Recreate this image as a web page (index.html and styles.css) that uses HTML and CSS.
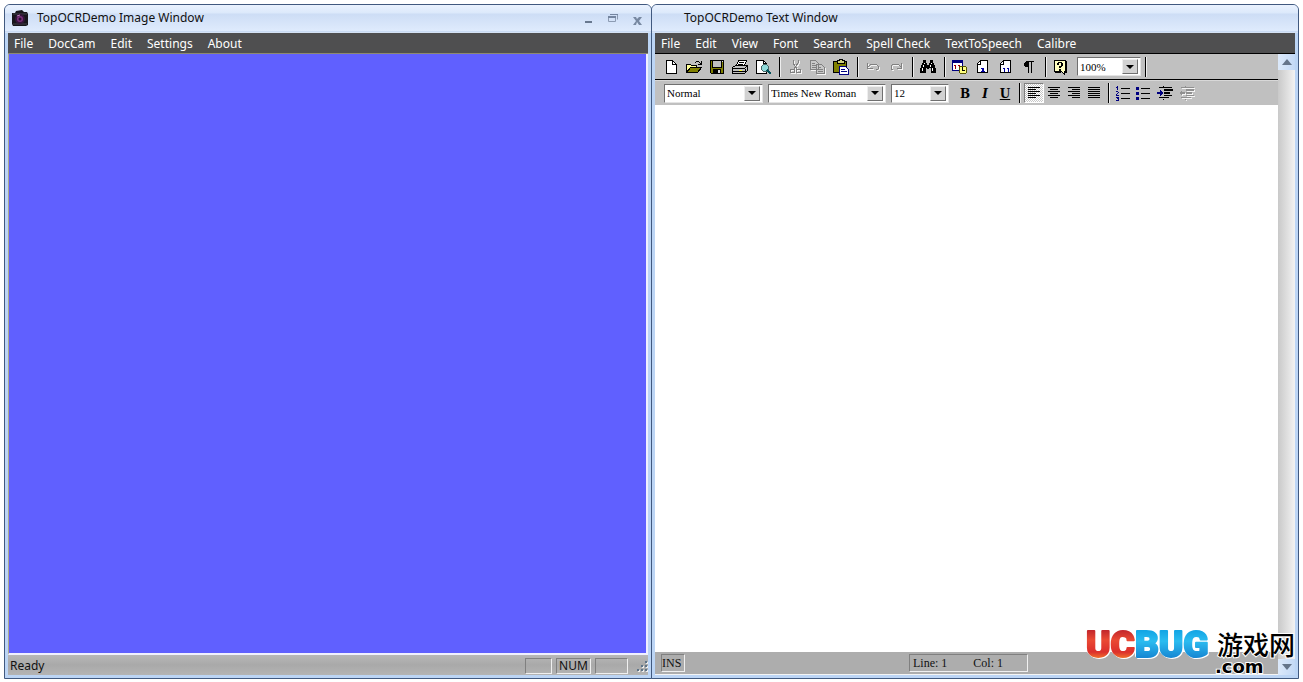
FILE: index.html
```html
<!DOCTYPE html>
<html lang="en">
<head>
<meta charset="utf-8">
<title>TopOCRDemo</title>
<link rel="stylesheet" href="styles.css">
</head>
<body>
<main class="desktop">
<section class="window">
  <header class="titlebar">
    <svg class="app-icon" width="18" height="18" viewBox="0 0 18 18"><path d="M1 4h3l1-2 6-1 2 2h3l1 2v11l-2 1H2l-1-2z" fill="#17161b"/><path d="M2 5h14M2 15h14" stroke="#45404c"/><circle cx="9" cy="10" r="5" fill="#35163b"/><circle cx="9" cy="10" r="3" fill="#7b2f7c"/><circle cx="9" cy="10" r="1.500" fill="#28102c"/><path d="M6 7l3-1" stroke="#b981b8"/></svg>
    <h1 class="title">TopOCRDemo Image Window</h1>
    <div class="captions">
      <button class="caption" aria-label="Minimize"><svg width="12" height="12"><path d="M2 8h7v2H2z" fill="#68788f"/></svg></button>
      <button class="caption" aria-label="Restore"><svg width="12" height="12"><path d="M3.500 1.500h7v5M1.500 3.500h7v5h-7z" fill="none" stroke="#8c9bb2"/><path d="M1 3h8v2H1zM3 1h8v1H3z" fill="#7485a0"/></svg></button>
      <button class="caption" aria-label="Close"><svg width="12" height="12"><path d="M2 4h3l1 2 2-2h3L8 8l3 4H8L6 9l-1 3H2l3-4z" fill="#7788a1"/></svg></button>
    </div>
  </header>
  <nav class="menu"><button>File</button><button>DocCam</button><button>Edit</button><button>Settings</button><button>About</button></nav>
  <div class="canvas"></div>
  <footer class="status">
    <span class="ready">Ready</span>
    <span class="pane pane-small"></span><span class="pane pane-num">NUM</span><span class="pane pane-wide"></span>
    <svg class="grip" width="12" height="12"><path d="M10 2h2v2h-2zM6 6h2v2H6zM10 6h2v2h-2zM2 10h2v2H2zM6 10h2v2H6zM10 10h2v2h-2z" fill="#eee"/><path d="M9 1h2v2H9zM5 5h2v2H5zM9 5h2v2H9zM1 9h2v2H1zM5 9h2v2H5zM9 9h2v2H9z" fill="#5f7488"/></svg>
  </footer>
</section>

<section class="window">
  <header class="titlebar titlebar-text"><h1 class="title">TopOCRDemo Text Window</h1></header>
  <nav class="menu"><button>File</button><button>Edit</button><button>View</button><button>Font</button><button>Search</button><button>Spell Check</button><button>TextToSpeech</button><button>Calibre</button></nav>
  <div class="workspace">
    <div class="editor">
      <div class="toolbar">
        <button class="tool" aria-label="New"><svg class="icon" viewBox="0 0 16 16"><path d="M3.500 1.500h6l4 4v9h-10z" fill="#fff" stroke="#000"/><path d="M9.500 1.500v4h4" fill="none" stroke="#000"/></svg></button>
        <button class="tool" aria-label="Open"><svg class="icon" viewBox="0 0 16 16"><path d="M0.500 13.500v-8h4l1 1h5v2" fill="#ffff9a" stroke="#000"/><path d="M0.500 13.500l4-5h11l-4 5z" fill="#808000" stroke="#000"/><path d="M9 3h1V2h3v1h1v1h1V2h1v4h-4V5h2V4h-1V3h-3v1H9z"/></svg></button>
        <button class="tool" aria-label="Save"><svg class="icon" viewBox="0 0 16 16"><path d="M1.500 1.500h13v13h-12l-1-1z" fill="#808000" stroke="#000"/><path d="M4 2h8v6H4z" fill="#c0c0c0"/><path d="M3 2h1v6h8V2h1v7H3zM4 10h8v4H4z"/><path d="M9 11h2v3H9zM13 2h1v1h-1z" fill="#ddd"/></svg></button>
        <button class="tool" aria-label="Print"><svg class="icon" viewBox="0 0 16 16"><path d="M4.500 6.500l2-5h8l-2 5z" fill="#fff" stroke="#000"/><path d="M7 3h5v1H7zM6 5h5v1H6z"/><path d="M0.500 8.500l3-2h12v5l-3 3h-12z" fill="#c0c0c0" stroke="#000"/><path d="M0 9h13v1H0zM1 12h12v1H1zM12 9l3-2v1l-3 2zM13 10h1v3h-1z"/><path d="M7 11h3v1H7z" fill="#ffff40"/></svg></button>
        <button class="tool" aria-label="Print preview"><svg class="icon" viewBox="0 0 16 16"><path d="M1.500 1.500h7l3 3v10h-10z" fill="#fff" stroke="#000"/><path d="M8.500 1.500v3h3" fill="none" stroke="#000"/><circle cx="10" cy="9" r="3.500" fill="#8fdada" stroke="#496666"/><path d="M12 11l4 4" stroke="#00505a" stroke-width="2"/></svg></button>
        <span class="sep"></span>
        <button class="tool" disabled aria-label="Cut"><svg class="icon disabled-icon" viewBox="0 0 16 16"><path d="M6 1v3l4 6M11 1v3l-4 6" fill="none" stroke="#808080"/><circle cx="5.500" cy="12" r="2" fill="none" stroke="#808080"/><circle cx="11.500" cy="12" r="2" fill="none" stroke="#808080"/></svg></button>
        <button class="tool" disabled aria-label="Copy"><svg class="icon disabled-icon" viewBox="0 0 16 16"><path d="M0.500 1.500h5l3 3v6h-8zM6.500 5.500h5l3 3v6h-8z" fill="#c8c8c8" stroke="#808080"/><path d="M2 4h3v1H2zM2 6h4v1H2zM2 8h4v1H2zM8 8h3v1H8zM8 10h5v1H8zM8 12h5v1H8z" fill="#808080"/></svg></button>
        <button class="tool" aria-label="Paste"><svg class="icon" viewBox="0 0 16 16"><path d="M0.500 2.500h13v11h-13z" fill="#808000" stroke="#000"/><path d="M4 1h2V0h3v1h2v3H4z" fill="#d0d080" stroke="#000"/><path d="M6.500 7.500h6l3 3v5h-9z" fill="#fff" stroke="#000080"/><path d="M8 10h4v1H8zM8 12h6v1H8z" fill="#000080"/></svg></button>
        <span class="sep"></span>
        <button class="tool" disabled aria-label="Undo"><svg class="icon disabled-icon" viewBox="0 0 16 16"><path d="M2.500 4v5h5M3 8l3-3h5l2 2v3l-2 1" fill="none" stroke="#808080"/></svg></button>
        <button class="tool" disabled aria-label="Redo"><svg class="icon disabled-icon" viewBox="0 0 16 16"><path d="M13.500 4v5h-5M13 8l-3-3H5L3 7v3l2 1" fill="none" stroke="#808080"/></svg></button>
        <span class="sep"></span>
        <button class="tool" aria-label="Find"><svg class="icon" viewBox="0 0 16 16"><path d="M3 1h3v3h1v2h2V4h1V1h3v3h1v2h1v3h1v5h-5V9H9v1H7V9H6v5H0V9h1V6h1V4h1z"/><path d="M4 4h1v1H4zM3 6h1v2H3zM2 9h1v3H2zM11 4h1v1h-1zM10 6h1v2h-1zM12 9h1v3h-1z" fill="#fff"/></svg></button>
        <span class="sep"></span>
        <button class="tool" aria-label="Date and time"><svg class="icon" viewBox="0 0 16 16"><path d="M0.500 1.500h10v10h-10z" fill="#fff" stroke="#000080"/><path d="M1 1h10v3H1z" fill="#000080"/><path d="M2 6h2v4H3V7H2zM6 6h2v4H7V7H6z" fill="#a00000"/><circle cx="11" cy="11" r="4" fill="#ffff80" stroke="#555500"/><path d="M10 8h1v3h2v1h-3z"/></svg></button>
        <button class="tool" aria-label="Page number"><svg class="icon" viewBox="0 0 16 16"><path d="M5.500 1.500h7v12h-10v-9z" fill="#fff" stroke="#000"/><path d="M5 2v3H2" fill="none" stroke="#000"/><path d="M7 9h2v3h1v1H6v-1h1v-2H6V9z" fill="#0000a0"/></svg></button>
        <button class="tool" aria-label="Page count"><svg class="icon" viewBox="0 0 16 16"><path d="M5.500 1.500h7v12h-10v-9z" fill="#fff" stroke="#000"/><path d="M5 2v3H2" fill="none" stroke="#000"/><path d="M5 9h2v4H6v-3H5zM9 9h2v4h-1v-3H9z" fill="#0000a0"/></svg></button>
        <button class="tool" aria-label="Show paragraph marks"><svg class="icon" viewBox="0 0 16 16"><path d="M6 2h7v1h-2v11h-1V3H8v11H7V8H5L3 7V4l1-1z"/></svg></button>
        <span class="sep"></span>
        <button class="tool" aria-label="Help"><svg class="icon" viewBox="0 0 16 16"><path d="M1.500 1.500h11v11h-1v3l-3-3h-7z" fill="#ffffc0" stroke="#000"/><path d="M14 2v12h-2v-1h1V2zM2 14h6v-1H2z"/><path d="M4 4h1V3h4v1h1v3H9v1H8v1H6V7h2V4H6v2H4zM6 10h2v2H6z"/></svg></button>
        <label class="combo combo-zoom"><select aria-label="Zoom"><option>100%</option></select><span class="drop"></span></label>
        <span class="sep"></span>
      </div>
      <div class="toolbar toolbar-format">
        <label class="combo combo-style"><select aria-label="Style"><option>Normal</option></select><span class="drop"></span></label>
        <label class="combo combo-font"><select aria-label="Font"><option>Times New Roman</option></select><span class="drop"></span></label>
        <label class="combo combo-size"><select aria-label="Size"><option>12</option></select><span class="drop"></span></label>
        <div class="group">
          <button class="tool letter bold">B</button><button class="tool letter italic">I</button><button class="tool letter underline">U</button>
        </div>
        <span class="sep"></span>
        <div class="group">
          <button class="tool pressed" aria-label="Align left"><svg class="icon" viewBox="0 0 16 16"><path d="M2 2h12v1H2zM2 4h8v1H2zM2 6h12v1H2zM2 8h8v1H2zM2 10h12v1H2zM2 12h8v1H2z"/></svg></button>
          <button class="tool" aria-label="Center"><svg class="icon" viewBox="0 0 16 16"><path d="M2 2h12v1H2zM4 4h8v1H4zM2 6h12v1H2zM4 8h8v1H4zM2 10h12v1H2zM4 12h8v1H4z"/></svg></button>
          <button class="tool" aria-label="Align right"><svg class="icon" viewBox="0 0 16 16"><path d="M2 2h12v1H2zM6 4h8v1H6zM2 6h12v1H2zM6 8h8v1H6zM2 10h12v1H2zM6 12h8v1H6z"/></svg></button>
          <button class="tool" aria-label="Justify"><svg class="icon" viewBox="0 0 16 16"><path d="M2 2h12v1H2zM2 4h12v1H2zM2 6h12v1H2zM2 8h12v1H2zM2 10h12v1H2zM2 12h12v1H2z"/></svg></button>
        </div>
        <span class="sep"></span>
        <div class="group">
          <button class="tool" aria-label="Numbered list"><svg class="icon" viewBox="0 0 16 16"><path d="M6 3h9v1H6zM6 8h9v1H6zM6 13h9v1H6z"/><path d="M2 1h1v4H2zM1 2h1v1H1zM1 6h2v1h1v1H3v1H2v1h2v1H1V9h1V8h1V7H1zM1 12h3v4H1v-1h2v-1H2v-1H1z" fill="#000080"/></svg></button>
          <button class="tool" aria-label="Bulleted list"><svg class="icon" viewBox="0 0 16 16"><path d="M6 3h9v1H6zM6 8h9v1H6zM6 13h9v1H6z"/><path d="M1 2h3v3H1zM1 7h3v3H1zM1 12h3v3H1z" fill="#000080"/></svg></button>
          <button class="tool tool-indent" aria-label="Increase indent"><svg class="icon" viewBox="0 0 16 16"><path d="M2 2h13v1H2zM7 4h9v2H7zM7 7h6v2H7zM7 10h8v1H7zM2 12h10v1H2zM6 1h1v1H6zM6 14h1v1H6z"/><path d="M0 7h3V5l3 3-3 3V9H0z" fill="#000080"/></svg></button>
          <button class="tool tool-indent" disabled aria-label="Decrease indent"><svg class="icon disabled-icon" viewBox="0 0 16 16"><path d="M2 2h13v1H2zM7 4h8v2H7zM7 7h6v2H7zM7 10h8v1H7zM2 12h10v1H2zM6 1h1v1H6zM6 14h1v1H6zM6 7H3V5L0 8l3 3V9h3z" fill="#909090"/></svg></button>
        </div>
      </div>
      <textarea class="page" aria-label="Document text"></textarea>
      <footer class="editor-status"><span class="pane mode">INS</span><span class="pane position"><span>Line: 1</span><span>Col: 1</span></span></footer>
    </div>
    <div class="scrollbar"><button aria-label="Scroll up"><svg width="10" height="6"><path d="M0 6l5-6 5 6z" fill="#65758a"/></svg></button><button aria-label="Scroll down"><svg width="10" height="6"><path d="M0 0l5 6 5-6z" fill="#65758a"/></svg></button></div>
  </div>
</section>
</main>
<svg class="watermark" width="216" height="60" viewBox="0 0 216 60">
  <defs>
    <linearGradient id="red" gradientUnits="userSpaceOnUse" x1="0" y1="12" x2="0" y2="42"><stop offset="0" stop-color="#b91f2a"/><stop offset="0.400" stop-color="#ea4a34"/><stop offset="0.800" stop-color="#dc2f2c"/><stop offset="1" stop-color="#f0702c"/></linearGradient>
    <linearGradient id="blue" gradientUnits="userSpaceOnUse" x1="0" y1="14" x2="0" y2="42"><stop offset="0" stop-color="#12a4e4"/><stop offset="0.400" stop-color="#2bbcf0"/><stop offset="1" stop-color="#1686d2"/></linearGradient>
  </defs>
  <text class="brand" x="2" y="41"><tspan class="brand-red">UC</tspan><tspan class="brand-blue">BUG</tspan></text>
  <text class="site" x="133" y="39">游戏网</text>
  <text class="domain" x="131" y="57">.com</text>
</svg>
</body>
</html>
```
FILE: styles.css
```css
* { box-sizing: border-box; }
body { margin: 0; height: 100vh; background: #fff; color: #111; font: 12px/16px "Noto Sans", sans-serif; position: relative; }
button { border: 0; padding: 0; background: none; color: inherit; font: inherit; }
svg { display: block; }
.desktop { display: flex; height: 100%; padding: 4px 4px 3px; }
.window { flex: 1; min-width: 0; display: flex; flex-direction: column; border: 1px solid #41597f; border-radius: 6px 6px 0 0; padding: 0 3px 3px; background: #bcd5f5; overflow: hidden; }
.window + .window { margin-left: -1px; }
.titlebar { flex: none; height: 28px; margin: 0 -3px; padding: 0 7px 2px 6px; display: flex; align-items: center; background: linear-gradient(#eaf2fe 0, #dce9fb 8px, #cdddf5 9px, #dfebfd 26px, #b5cbea 27px, #f5f9ff 28px); }
.titlebar-text { padding-left: 32px; }
.app-icon { margin-right: 8px; }
.title { margin: 0; font-size: 12px; font-weight: 400; line-height: 16px; }
.captions { margin-left: auto; display: flex; gap: 12px; padding: 2px 1px 0 0; }
.caption { width: 12px; height: 12px; }
.menu { flex: none; height: 21px; display: flex; gap: 15px; padding: 2px 6px 0; background: #4f4f50; color: #fff; border-bottom: 1px solid #8d8a72; }
.window + .window .menu { border-color: #000; }
.canvas { flex: 1; background: #6060ff; border: solid #f0f0ff; border-width: 0 2px 2px 1px; border-left-color: #aaa890; }
.status { flex: none; height: 20px; display: flex; align-items: center; gap: 4px; padding: 2px 0 0 2px; background: linear-gradient(#b8b8b8, #a9a9a9 50%, #b4b4b4); }
.ready { margin-right: auto; }
.pane { height: 16px; border: 1px solid; border-color: #808080 #f0f0f0 #f0f0f0 #808080; }
.pane-small { width: 27px; }
.pane-num { width: 35px; text-align: center; line-height: 14px; }
.pane-wide { width: 33px; }
.grip { margin-left: 4px; }
.workspace { flex: 1; min-height: 0; display: flex; }
.editor { flex: 1; min-width: 0; display: flex; flex-direction: column; font-family: "Liberation Serif", serif; }
.toolbar { flex: none; display: flex; align-items: center; height: 26px; padding-left: 5px; background: #c0c0c0; border-bottom: 1px solid #000; }
.toolbar-format { height: 25px; padding-left: 9px; border-bottom: 0; border-top: 1px solid #d8d8d8; }
.tool { flex: none; width: 23px; height: 20px; padding-left: 3px; display: flex; align-items: center; }
.icon { flex: none; width: 16px; height: 16px; shape-rendering: crispEdges; }
.disabled-icon { filter: drop-shadow(1px 1px 0 #f4f4f4); }
.sep { flex: none; width: 9px; height: 20px; background: linear-gradient(#000, #000) 4px 0 / 1px 100% no-repeat, linear-gradient(#eee, #eee) 5px 0 / 1px 100% no-repeat; }
.combo { flex: none; display: flex; height: 19px; padding-right: 2px; align-items: center; background: #fff; border: 1px solid; border-color: #707070 #e4e4e4 #e4e4e4 #707070; }
.combo select { flex: 1; min-width: 0; height: 16px; appearance: none; border: 0; padding: 0 0 0 2px; background: none; color: #000; font: 11px/16px "Liberation Serif", serif; }
.drop { flex: none; width: 16px; height: 15px; display: grid; place-items: center; background: #d2d2d2; border: 1px solid; border-color: #eee #707070 #707070 #eee; pointer-events: none; }
.drop::before { content: ""; border: 4px solid transparent; border-top-color: #000; border-bottom: 0; }
.combo-zoom { width: 64px; margin-left: 4px; }
.combo-style { width: 99px; margin-right: 5px; }
.combo-font { width: 118px; margin-right: 5px; }
.combo-size { width: 58px; margin-right: 6px; }
.group { display: flex; }
.toolbar-format .tool { width: 20px; padding-left: 2px; }
.toolbar-format .tool-indent { width: 22px; padding-left: 4px; }
.toolbar-format .letter { justify-content: center; padding: 2px 0 0; color: #000; font: 700 12px/16px "DejaVu Serif", serif; }
.toolbar-format .italic { font-style: italic; }
.toolbar-format .underline { text-decoration: underline; }
.toolbar-format .pressed { padding-left: 1px; background: repeating-conic-gradient(#c8c8c8 0 25%, #fff 0 50%) 0 0 / 2px 2px; border: 1px solid; border-color: #808080 #fff #fff #808080; }
.page { flex: 1; min-height: 0; display: block; width: 100%; border: 0; padding: 8px; resize: none; outline: 0; background: #fff; font: 16px/20px "Liberation Serif", serif; }
.editor-status { flex: none; height: 23px; display: flex; align-items: center; padding: 0 6px; background: #adadad; border-bottom: 1px solid #f4f4f4; line-height: 16px; }
.editor-status .pane { height: 18px; }
.mode { width: 24px; }
.position { width: 119px; margin-left: 224px; display: flex; gap: 26px; padding-left: 3px; }
.scrollbar { flex: none; width: 17px; display: flex; flex-direction: column; justify-content: space-between; background: linear-gradient(90deg, #c9c9c9, #f2f2f2); }
.scrollbar button { height: 16px; display: grid; place-items: center; background: linear-gradient(90deg, #dce9fa, #c3d9f6); }
.watermark { position: absolute; right: 3px; bottom: 6px; pointer-events: none; }
.brand { font: 900 37px Roboto, sans-serif; stroke-width: 2px; stroke-linejoin: round; filter: drop-shadow(1px 1px 0 #fff) drop-shadow(-1px -1px 0 #fff); }
.brand-red { fill: url(#red); stroke: url(#red); }
.brand-blue { fill: url(#blue); stroke: url(#blue); }
.site { font: 500 26px "Noto Sans CJK SC", sans-serif; fill: #000; stroke: #fff; stroke-width: 2px; paint-order: stroke; }
.domain { font: 700 18px "DejaVu Sans", sans-serif; fill: #000; stroke: #fff; stroke-width: 2px; paint-order: stroke; }
```
